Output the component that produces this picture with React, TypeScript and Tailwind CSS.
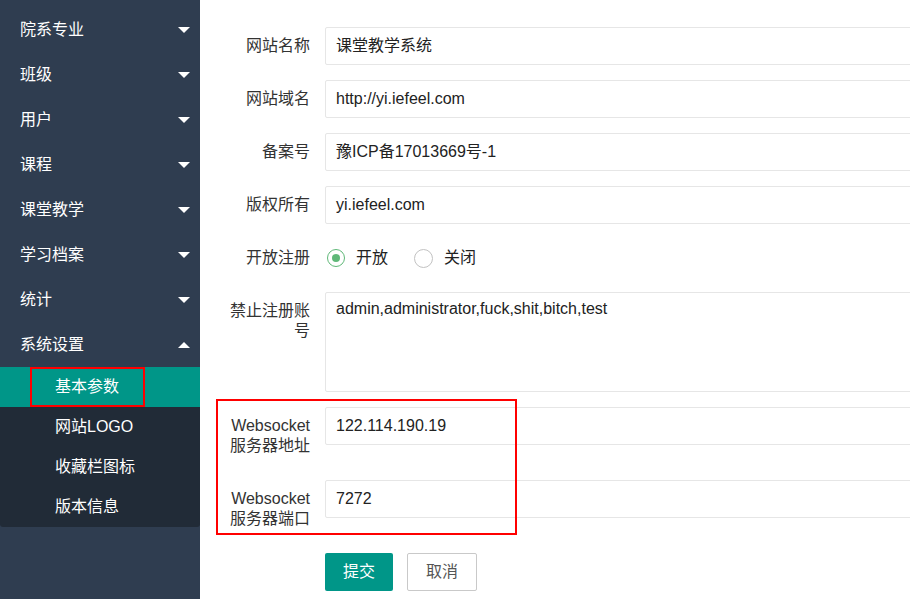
import React from 'react';

const menus = ['院系专业', '班级', '用户', '课程', '课堂教学', '学习档案', '统计'];
const subMenus = ['网站LOGO', '收藏栏图标', '版本信息'];

function Caret({ up }: { up?: boolean }) {
  return up ? (
    <span className="w-0 h-0 border-l-[6px] border-r-[6px] border-b-[6px] border-l-transparent border-r-transparent border-b-white" />
  ) : (
    <span className="w-0 h-0 border-l-[6px] border-r-[6px] border-t-[6px] border-l-transparent border-r-transparent border-t-white" />
  );
}

function Sidebar() {
  return (
    <aside className="w-[200px] shrink-0 h-full bg-[#2f3d50] pt-[7px] text-[16px] text-white">
      {menus.map(m => (
        <div key={m} className="h-[45px] flex items-center justify-between pl-[20px] pr-[10px]">
          <span>{m}</span>
          <Caret />
        </div>
      ))}
      <div className="h-[45px] flex items-center justify-between pl-[20px] pr-[10px]">
        <span>系统设置</span>
        <Caret up />
      </div>
      <div className="bg-[#212b37] rounded-b-[3px]">
        <div className="h-[40px] bg-[#009688] flex items-center pl-[30px]">
          <span className="h-[40px] w-[115px] border-2 border-[#ff0000] flex items-center pl-[23px]">基本参数</span>
        </div>
        {subMenus.map(s => (
          <div key={s} className="h-[40px] flex items-center pl-[55px]">
            {s}
          </div>
        ))}
      </div>
    </aside>
  );
}

function Label({ children }: { children: React.ReactNode }) {
  return (
    <label className="w-[110px] shrink-0 px-[15px] py-[9px] text-right leading-[20px] text-[#333]">
      {children}
    </label>
  );
}

function TextRow({ label, value }: { label: React.ReactNode; value: string }) {
  return (
    <div className="flex mb-[15px]">
      <Label>{label}</Label>
      <div className="w-[700px] h-[38px] border border-[#e6e6e6] rounded-[2px] px-[10px] flex items-center text-[#222] shrink-0">
        {value}
      </div>
    </div>
  );
}

function Radio({ checked, text }: { checked?: boolean; text: string }) {
  return (
    <div className="flex items-center mr-[26px]">
      <span
        className={
          checked
            ? 'w-[18px] h-[18px] rounded-full border-[1.5px] border-[#5fb878] flex items-center justify-center'
            : 'w-[19px] h-[19px] rounded-full border-[1.5px] border-[#c2c2c2]'
        }
      >
        {checked && <span className="w-[8px] h-[8px] rounded-full bg-[#5fb878]" />}
      </span>
      <span className="ml-[11px] text-[#222]">{text}</span>
    </div>
  );
}

export default function App() {
  return (
    <div
      className="flex w-[910px] h-[599px] overflow-hidden bg-white text-[16px]"
      style={{ fontFamily: '"Liberation Sans", "Noto Sans CJK SC", sans-serif' }}
    >
      <Sidebar />
      <main className="flex-1 overflow-hidden pt-[27px] pl-[15px]">
        <TextRow label="网站名称" value="课堂教学系统" />
        <TextRow label="网站域名" value="http://yi.iefeel.com" />
        <TextRow label="备案号" value="豫ICP备17013669号-1" />
        <TextRow label="版权所有" value="yi.iefeel.com" />

        <div className="flex mb-[15px]">
          <Label>开放注册</Label>
          <div className="h-[38px] flex items-center pl-[2px]">
            <Radio checked text="开放" />
            <Radio text="关闭" />
          </div>
        </div>

        <div className="flex mb-[15px]">
          <Label>禁止注册账号</Label>
          <div className="w-[700px] h-[100px] border border-[#e6e6e6] rounded-[2px] px-[10px] py-[6px] leading-[20px] text-[#222] shrink-0">
            admin,administrator,fuck,shit,bitch,test
          </div>
        </div>

        <div className="relative">
          <div className="absolute left-px top-[-8px] w-[301px] h-[136px] border-2 border-[#ff0000] pointer-events-none" />
          <TextRow label={<>Websocket<br />服务器地址</>} value="122.114.190.19" />
          <TextRow label={<>Websocket<br />服务器端口</>} value="7272" />
        </div>

        <div className="flex pl-[110px] gap-[14px]">
          <button className="h-[38px] w-[68px] bg-[#009688] text-white rounded-[2px]">提交</button>
          <button className="h-[38px] w-[70px] bg-white border border-[#c9c9c9] text-[#555] rounded-[2px]">取消</button>
        </div>
      </main>
    </div>
  );
}
